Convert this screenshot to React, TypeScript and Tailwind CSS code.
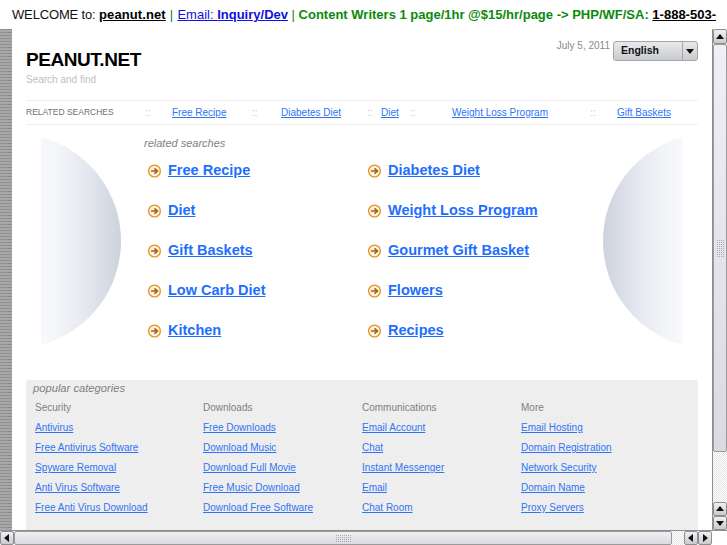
import React from "react";

const Arrow = ({ d }: { d: "up" | "down" | "left" | "right" }) => {
  const p = { up: "1,7 9,7 5,2", down: "1,3 9,3 5,8", left: "7,1 7,9 2,5", right: "3,1 3,9 8,5" }[d];
  return (
    <svg width="10" height="10" viewBox="0 0 10 10">
      <polygon points={p} fill="#111" />
    </svg>
  );
};

const Btn = ({ d, className }: { d: "up" | "down" | "left" | "right"; className: string }) => (
  <div className={`flex items-center justify-center border border-[#8f8f8f] rounded-[2px] bg-gradient-to-b from-[#f0f1f4] to-[#c9cbd0] ${className}`}>
    <Arrow d={d} />
  </div>
);

const Grip = ({ cols, rows }: { cols: number; rows: number }) => (
  <div className="flex flex-col gap-[1px]">
    {Array.from({ length: rows }).map((_, r) => (
      <div key={r} className="flex gap-[1px]">
        {Array.from({ length: cols }).map((_, c) => (
          <div key={c} className="w-[1px] h-[1px] bg-[#a9abb0]" />
        ))}
      </div>
    ))}
  </div>
);

const Half = ({ flip }: { flip?: boolean }) => (
  <svg width="80" height="208" viewBox="0 0 80 208" className={flip ? "-scale-x-100" : ""}>
    <defs>
      <linearGradient id={flip ? "gf" : "gl"} x1="0" x2="1" y1="0" y2="0">
        <stop offset="0" stopColor="#f8f9fc" />
        <stop offset="0.25" stopColor="#f3f4f8" />
        <stop offset="0.6" stopColor="#e3e6ed" />
        <stop offset="1" stopColor="#cdd2de" />
      </linearGradient>
    </defs>
    <path d="M0 0 A107.6 107.6 0 0 1 0 208 Z" fill={`url(#${flip ? "gf" : "gl"})`} />
  </svg>
);

const Go = () => (
  <svg width="14" height="14" viewBox="0 0 14 14" className="shrink-0 mt-[2px]">
    <circle cx="6.5" cy="7" r="5.9" fill="#fdf3e3" stroke="#e8921e" strokeWidth="1.3" />
    <path d="M3 7H9M6.5 4.3L9.5 7L6.5 9.7" fill="none" stroke="#a8620f" strokeWidth="1.6" />
  </svg>
);

const related = [
  ["Free Recipe", "Diabetes Diet"],
  ["Diet", "Weight Loss Program"],
  ["Gift Baskets", "Gourmet Gift Basket"],
  ["Low Carb Diet", "Flowers"],
  ["Kitchen", "Recipes"],
];

const cats = [
  { w: "w-[168px]", t: "Security", l: ["Antivirus", "Free Antivirus Software", "Spyware Removal", "Anti Virus Software", "Free Anti Virus Download"] },
  { w: "w-[159px]", t: "Downloads", l: ["Free Downloads", "Download Music", "Download Full Movie", "Free Music Download", "Download Free Software"] },
  { w: "w-[159px]", t: "Communications", l: ["Email Account", "Chat", "Instant Messenger", "Email", "Chat Room"] },
  { w: "w-[159px]", t: "More", l: ["Email Hosting", "Domain Registration", "Network Security", "Domain Name", "Proxy Servers"] },
];

const Sep = ({ className }: { className: string }) => <span className={`text-[#c4c4c4] ${className}`}>::</span>;
const TopLink = ({ children, className }: { children: React.ReactNode; className: string }) => (
  <span className={className}><a className="text-[#2f74f5] underline">{children}</a></span>
);

export default function App() {
  return (
    <div className="w-[727px] h-[545px] overflow-hidden flex flex-col bg-white font-['Liberation_Sans',sans-serif]">
      <div className="h-[29px] shrink-0 pl-[12px] pt-[7px] text-[13px] leading-[16px] whitespace-nowrap overflow-hidden text-[#111]">
        <span className="tracking-[-0.15px]">WELCOME to: </span><a className="font-bold underline text-black tracking-[0.1px]">peanut.net</a>
        <span className="text-[#0a8a0a] tracking-[0.35px]"> | </span>
        <a className="underline text-[#1010e0]">Email: <b>Inquiry/Dev</b></a>
        <span className="text-[#0a8a0a]"> | </span>
        <b className="text-[#0a8a0a]">Content Writers 1 page/1hr @$15/hr/page -&gt; PHP/WF/SA: </b>
        <a className="font-bold underline text-black">1-888-503-</a>
      </div>

      <div className="flex-1 flex min-h-0">
        <div className="w-[12px] shrink-0 bg-[repeating-linear-gradient(to_bottom,#8f8f8f_0px,#8f8f8f_1px,#a8a8a8_1px,#a8a8a8_3px)]" />

        <div className="w-[700px] shrink-0 flex flex-col overflow-hidden pl-[14px] pr-[14px]">
          <div className="h-[71px] shrink-0 flex justify-between">
            <div className="pt-[19px]">
              <div className="text-[19px] leading-[23px] font-bold text-black tracking-[-0.45px]">PEANUT.NET</div>
              <div className="text-[10px] leading-[12px] mt-[3px] text-[#c0c0c0]">Search and find</div>
            </div>
            <div className="flex items-start pt-[11px]">
              <span className="text-[10px] leading-[12px] text-[#8a8a8a] mr-[3px]">July 5, 2011</span>
              <div className="w-[85px] h-[20px] mt-[1px] flex border border-[#a5a5a5] rounded-[3px] bg-gradient-to-b from-[#e8e9ec] to-[#c9cbd0]">
                <span className="flex-1 pl-[7px] text-[10.5px] leading-[17px] font-bold text-[#111]">English</span>
                <div className="w-[15px] border-l border-[#a5a5a5] flex items-center justify-center"><Arrow d="down" /></div>
              </div>
            </div>
          </div>

          <div className="h-[25px] shrink-0 border-y border-[#eeeeee] flex items-center text-[10px] whitespace-nowrap">
            <span className="text-[#707070] w-[119px] text-[8.5px]">RELATED SEARCHES</span>
            <Sep className="w-[27px]" />
            <TopLink className="w-[80px]">Free Recipe</TopLink>
            <Sep className="w-[29px]" />
            <TopLink className="w-[86px]">Diabetes Diet</TopLink>
            <Sep className="w-[14px]" />
            <TopLink className="w-[29px]">Diet</TopLink>
            <Sep className="w-[42px]" />
            <TopLink className="w-[138px]">Weight Loss Program</TopLink>
            <Sep className="w-[27px]" />
            <TopLink className="w-[60px]">Gift Baskets</TopLink>
          </div>

          <div className="h-[255px] shrink-0 flex">
            <div className="w-[15px] shrink-0" />
            <div className="w-[80px] shrink-0 pt-[12px]"><Half /></div>
            <div className="w-[23px] shrink-0" />
            <div className="flex-1 pt-[11px]">
              <div className="text-[11px] leading-[14px] italic text-[#808080]">related searches</div>
              <div className="grid grid-cols-[220px_220px]">
                {related.flat().map((t) => (
                  <div key={t} className="h-[40px] flex items-center pl-[4px] gap-[6px]">
                    <Go />
                    <a className="text-[14.5px] font-bold underline text-[#1e6eff] leading-[20px] -mt-[1px]">{t}</a>
                  </div>
                ))}
              </div>
            </div>
            <div className="w-[80px] shrink-0 pt-[12px] mr-[15px]"><Half flip /></div>
          </div>

          <div className="flex-1 bg-[#eeeeee] rounded-t-[2px] pl-[7px] pt-[1px] min-h-0">
            <div className="text-[11.2px] leading-[14px] italic text-[#808080]">popular categories</div>
            <div className="flex pl-[2px] mt-[3px]">
              {cats.map((c) => (
                <div key={c.t} className={`${c.w} shrink-0`}>
                  <div className="h-[20px] text-[10px] leading-[20px] text-[#808080]">{c.t}</div>
                  {c.l.map((x) => (
                    <div key={x} className="h-[20px] text-[10px] leading-[20px]">
                      <a className="underline text-[#2f74f5]">{x}</a>
                    </div>
                  ))}
                </div>
              ))}
            </div>
          </div>
        </div>

        <div className="w-[15px] shrink-0 flex flex-col border-l border-[#8f8f8f] bg-[#f1f1f1]">
          <Btn d="up" className="h-[15px] shrink-0" />
          <div className="h-[408px] shrink-0 border border-[#9a9a9a] rounded-[2px] bg-gradient-to-b from-[#eef0f6] to-[#d9dbe1] flex items-center justify-center">
            <Grip cols={4} rows={9} />
          </div>
          <div className="flex-1 bg-[repeating-conic-gradient(#e4e4e4_0_25%,#ffffff_0_50%)] bg-[length:2px_2px]" />
          <Btn d="up" className="h-[14px] shrink-0" />
          <Btn d="down" className="h-[14px] shrink-0" />
        </div>
      </div>

      <div className="h-[15px] shrink-0 flex border-t border-[#8f8f8f]">
        <Btn d="left" className="w-[14px] shrink-0" />
        <div className="w-[658px] shrink-0 border border-[#9a9a9a] rounded-[2px] bg-gradient-to-b from-[#eef0f6] to-[#d9dbe1] flex items-center justify-center">
          <Grip cols={8} rows={4} />
        </div>
        <div className="flex-1 bg-[repeating-conic-gradient(#e4e4e4_0_25%,#ffffff_0_50%)] bg-[length:2px_2px]" />
        <Btn d="left" className="w-[14px] shrink-0" />
        <Btn d="right" className="w-[14px] shrink-0" />
        <div className="w-[15px] shrink-0 bg-white" />
      </div>
    </div>
  );
}
